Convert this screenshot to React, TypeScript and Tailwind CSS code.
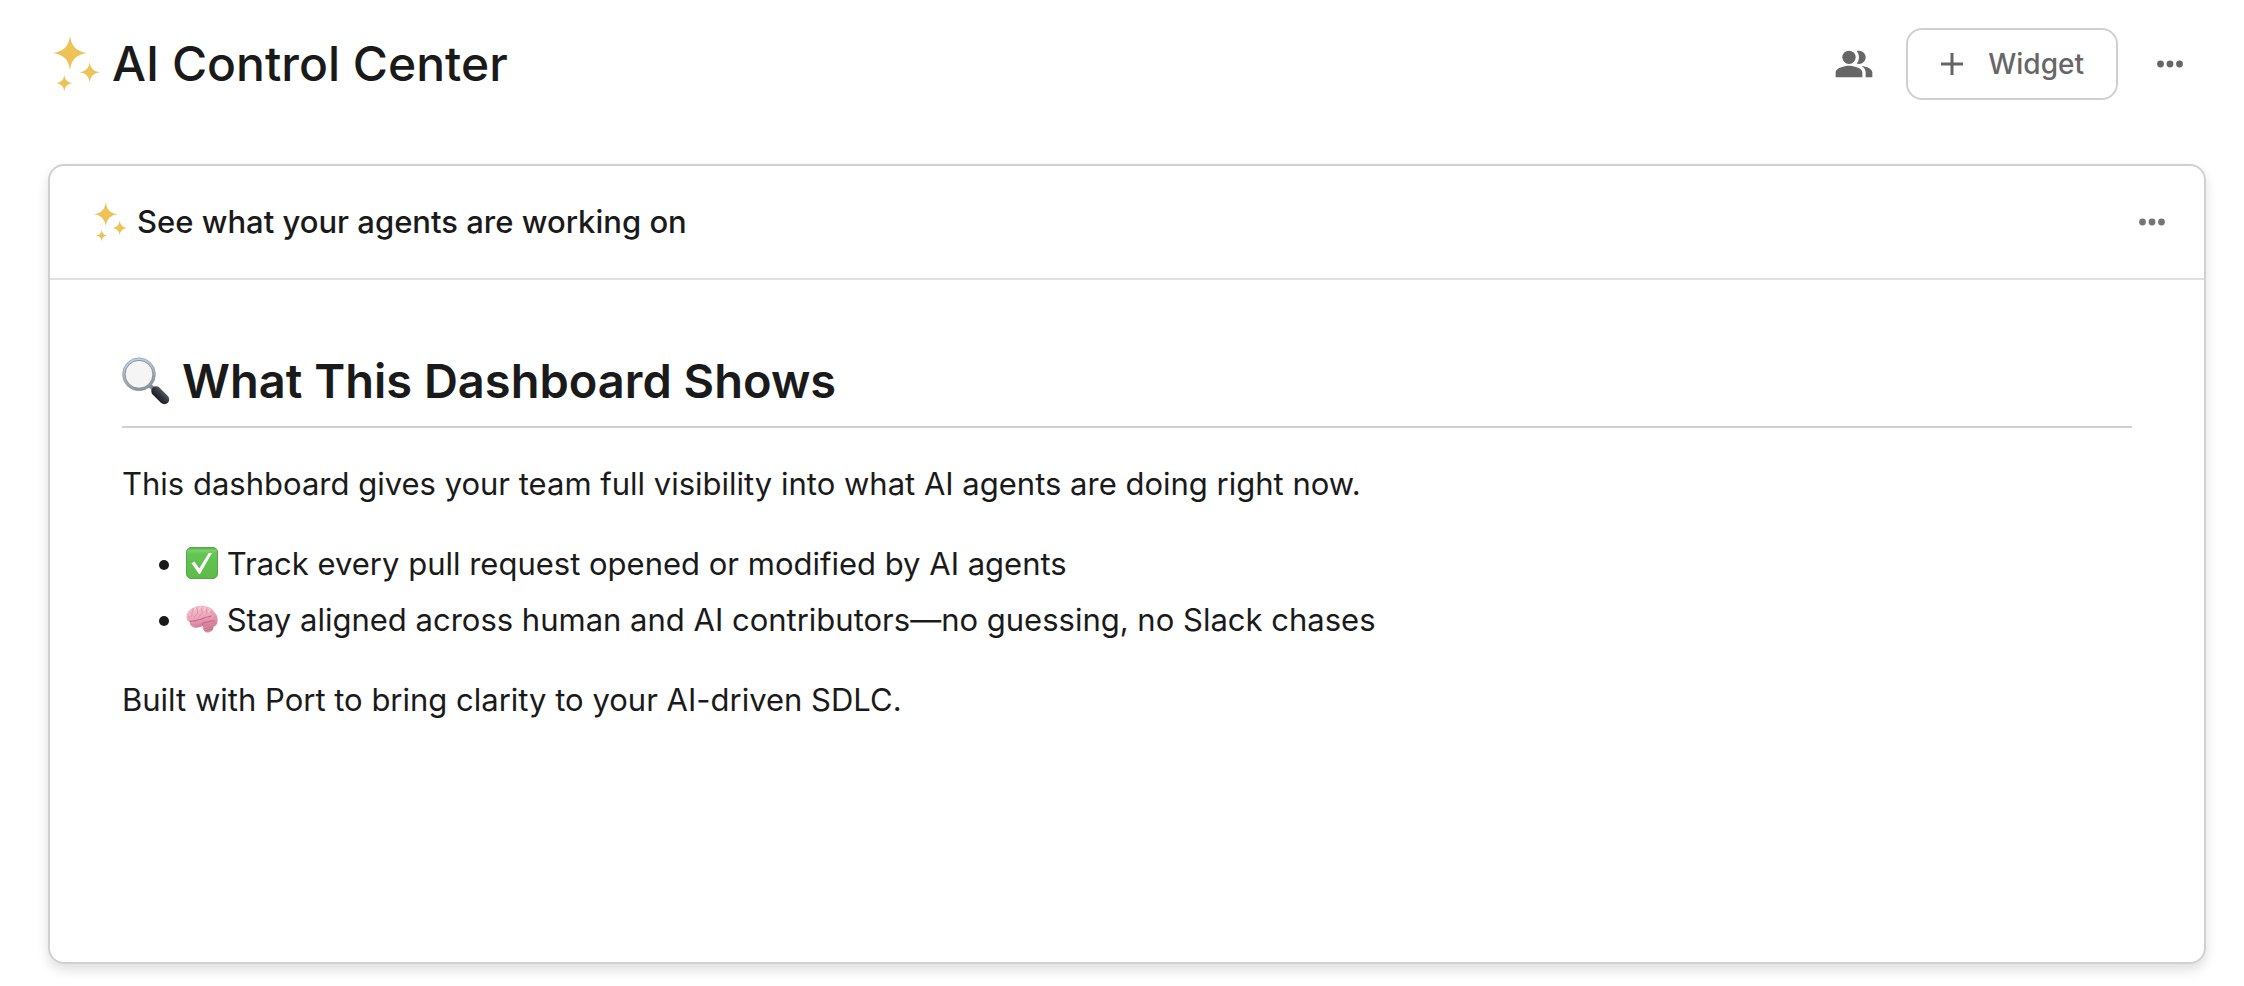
import { MdPeopleAlt } from "react-icons/md";

function Sparkles({ className }: { className: string }) {
  return (
    <svg viewBox="0 0 48 56" className={className} fill="#edc357" aria-hidden="true">
      <path d="M18 0C19.5 10 24 15.500 35 17C24 18.500 19.500 24 18 34C16.500 24 12 18.500 1 17C12 15.500 16.500 10 18 0Z" />
      <path d="M37.700 26C38.700 32.500 41.500 35.300 48 36.300C41.500 37.300 38.700 40.100 37.700 46.600C36.700 40.100 33.900 37.300 27.400 36.300C33.900 35.300 36.700 32.500 37.700 26Z" />
      <path d="M12.300 39C13.100 44.200 15.300 46.400 20.500 47.200C15.300 48 13.100 50.200 12.300 55.400C11.500 50.200 9.300 48 4.100 47.200C9.300 46.400 11.500 44.200 12.300 39Z" />
    </svg>
  );
}

function Dots() {
  return (
    <svg viewBox="0 0 26 8" className="h-2 w-[26px]" fill="currentColor" aria-hidden="true">
      <circle cx="3.500" cy="4" r="3.400" />
      <circle cx="13" cy="4" r="3.400" />
      <circle cx="22.500" cy="4" r="3.400" />
    </svg>
  );
}

function Magnifier() {
  return (
    <svg viewBox="0 0 48 48" className="size-12 shrink-0" aria-hidden="true">
      <defs>
        <linearGradient id="rim" x1="0.300" y1="0" x2="0.600" y2="1">
          <stop offset="0" stopColor="#bcd3f2" />
          <stop offset="0.450" stopColor="#b4b9c0" />
          <stop offset="1" stopColor="#8d939b" />
        </linearGradient>
        <linearGradient id="grip" x1="0" y1="1" x2="1" y2="0">
          <stop offset="0" stopColor="#15171a" />
          <stop offset="0.550" stopColor="#34383e" />
          <stop offset="1" stopColor="#5c626a" />
        </linearGradient>
      </defs>
      <path d="M27 27.500L32.500 33" stroke="#80868e" strokeWidth="4" />
      <path d="M33 33L43 43" stroke="url(#grip)" strokeWidth="9.500" />
      <path d="M34 34L42.500 42.500" stroke="url(#grip)" strokeWidth="9.500" strokeLinecap="round" />
      <circle cx="17" cy="17.300" r="15.200" fill="#f5f5f6" stroke="url(#rim)" strokeWidth="2.600" />
      <circle cx="17" cy="17.300" r="13.900" fill="none" stroke="#747c87" strokeWidth="0.800" />
      <circle cx="17" cy="17.300" r="16.400" fill="none" stroke="#7f8ea6" strokeWidth="0.600" />
    </svg>
  );
}

function CheckMark() {
  return (
    <svg viewBox="0 0 32 32" className="inline-block size-8 align-[-4px]" aria-hidden="true">
      <defs>
        <linearGradient id="green" x1="0" y1="0" x2="0" y2="1">
          <stop offset="0" stopColor="#51ab46" />
          <stop offset="0.100" stopColor="#7ed06c" />
          <stop offset="0.200" stopColor="#62c654" />
          <stop offset="1" stopColor="#5fba49" />
        </linearGradient>
      </defs>
      <rect x="0.500" y="0.500" width="31" height="31" rx="4.500" fill="url(#green)" stroke="#56a948" />
      <path d="M5.500 16.200L8.300 14.500L13.200 21.500L22.700 6H26L14 27H13Z" fill="#fff" />
    </svg>
  );
}

function Brain() {
  return (
    <svg viewBox="0 0 32 32" className="inline-block size-8 align-[-4px]" aria-hidden="true">
      <defs>
        <linearGradient id="pink" x1="0" y1="0" x2="0.300" y2="1">
          <stop offset="0" stopColor="#f8c6d3" />
          <stop offset="0.600" stopColor="#eda6ba" />
          <stop offset="1" stopColor="#d67f9a" />
        </linearGradient>
      </defs>
      <path d="M16.500 24C17 21.500 27 20.500 27.500 24C28 27 24.500 29.500 21.500 29.500C19 29.500 17 27 16.500 24Z" fill="#d68e98" />
      <path d="M18.500 25.800C21 24.800 24 24.500 27 25M19.500 27.800C22 26.600 24.500 26.300 26.500 26.800" fill="none" stroke="#b06676" strokeWidth="0.700" />
      <path d="M0.500 14C0.500 10 3 6.500 7 5C10 3 14 2.300 17.500 3C22 3 26.500 5.500 28.500 9C31 11.500 32 15 31.500 18C31.500 21.500 29 24.500 25.500 24C22 24.800 19 24 17 22.500C14.500 24.500 9 26 6 23.500C4 22.500 3.500 20.500 4 19C1.500 18.300 0.500 16.500 0.500 14Z" fill="url(#pink)" />
      <path d="M4 19C6 17 8 19 10 17.500C13 16 16 17 18 15C20 13.500 23 14.500 25 13M17 22.500C15 21 18 19 21 19C24 19 25 17 28 18" fill="none" stroke="#c2688a" strokeWidth="1.100" strokeLinecap="round" />
      <path d="M7 5.500C8 8 5 9 6 12C6 14 4 14 2.500 14M11 4C10 7 13 8 11 11C10 13 8 12 8.500 15M16 3.500C14 6 17 8 16 10.500C15 13 13 12 12.500 14M21 4.500C19 7 22 8 20.500 11M26 8C24 8 24.500 10 27 11C28.500 12 28 14 30.500 14M7 22C10 22.500 12 20 15 20.500M22 22C24 22 26 20.500 28.500 21.500" fill="none" stroke="#d98aa2" strokeWidth="0.800" strokeLinecap="round" />
      <path d="M8.500 6.500C9.500 6 9.500 5.500 10 5M13.500 6C14 5 14 4.500 15 4.500M18.500 7C18.500 6 19 5 20 5M22.500 9C22.500 8 23.500 7 24 7" fill="none" stroke="#fde3ea" strokeWidth="0.900" strokeLinecap="round" />
    </svg>
  );
}

export default function App() {
  return (
    <div className="flex min-h-screen flex-col bg-white pb-[22px] font-['Inter',sans-serif] text-[#1a1a1a]">
      <header className="flex items-center justify-between pt-7 pr-[54px] pb-16 pl-[52px]">
        <div className="flex items-center gap-3">
          <Sparkles className="h-14 w-12" />
          <h1 className="text-[48px] leading-[56px] font-medium">AI Control Center</h1>
        </div>
        <div className="flex items-center gap-8 text-[#666]">
          <button type="button" aria-label="Share with people">
            <MdPeopleAlt className="size-10" />
          </button>
          <button
            type="button"
            className="flex h-[72px] items-center gap-6 rounded-2xl border-2 border-[#d0d0d0] px-8 text-[28px] font-medium"
          >
            <svg viewBox="0 0 24 24" className="size-6" stroke="currentColor" strokeWidth="3" aria-hidden="true">
              <path d="M12 1V23M1 12H23" />
            </svg>
            Widget
          </button>
          <button type="button" aria-label="Page options" className="flex size-10 items-center justify-center">
            <Dots />
          </button>
        </div>
      </header>

      <section className="mr-[38px] ml-12 flex-1 rounded-2xl border-2 border-[#d0d0d0] shadow-[0_6px_12px_rgba(0,0,0,0.13)]">
        <div className="flex h-[114px] items-center justify-between border-b-2 border-[#e0e0e0] pr-8 pl-[43px]">
          <div className="flex items-center gap-[10px]">
            <Sparkles className="h-10 w-[34px]" />
            <h2 className="text-[31px] leading-10 font-medium">See what your agents are working on</h2>
          </div>
          <button
            type="button"
            aria-label="Widget options"
            className="flex size-10 items-center justify-center text-[#757575]"
          >
            <Dots />
          </button>
        </div>

        <article className="px-[72px] pt-[72px] pb-6 text-[31px] leading-[56px]">
          <h3 className="mb-7 flex items-center gap-3 border-b-2 border-[#d0d0d0] pb-4 text-[47px] leading-[58px] font-semibold">
            <Magnifier />
            What This Dashboard Shows
          </h3>
          <p>This dashboard gives your team full visibility into what AI agents are doing right now.</p>
          <ul className="my-6 list-disc pl-16">
            <li>
              <CheckMark /> Track every pull request opened or modified by AI agents
            </li>
            <li>
              <Brain /> Stay aligned across human and AI contributors—no guessing, no Slack chases
            </li>
          </ul>
          <p>Built with Port to bring clarity to your AI-driven SDLC.</p>
        </article>
      </section>
    </div>
  );
}
